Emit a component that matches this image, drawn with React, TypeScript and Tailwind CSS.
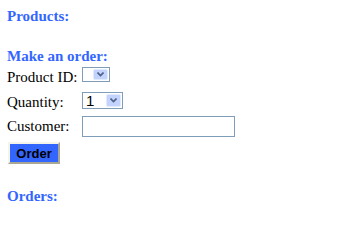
import React from 'react';

function Chevron() {
  return (
    <svg width="7" height="5" viewBox="0 0 7 5" className="block">
      <path d="M0.5 0.5 L3.5 3.5 L6.5 0.5" fill="none" stroke="#4d6185" strokeWidth="1.6" />
    </svg>
  );
}

function FakeSelect({ value, width, height }: { value?: string; width: string; height: string }) {
  return (
    <div className={`flex items-stretch border border-[#7f9db9] bg-white ${width} ${height}`}>
      <div className="flex-1 pl-[3px] flex items-center font-['Liberation_Sans',sans-serif] text-[15px] leading-none text-black">
        {value}
      </div>
      <div className="m-px w-[15px] flex items-center justify-center bg-[#c3d3fd] border border-[#e1eafe] rounded-[2px]">
        <Chevron />
      </div>
    </div>
  );
}

export default function App() {
  return (
    <div className="w-[364px] h-[240px] bg-white pl-[7px] pt-[7px] font-['Liberation_Serif',serif] text-[15px] text-black">
      <div className="h-[18px] leading-[18px] font-bold text-[#3366ff]">Products:</div>
      <div className="mt-[22px] h-[18px] leading-[18px] font-bold text-[#3366ff]">Make an order:</div>

      <div className="mt-px h-[24px] flex items-start">
        <div className="w-[75px] mt-[2px] leading-[18px]">Product ID:</div>
        <div className="mt-px">
          <FakeSelect width="w-[28px]" height="h-[15px]" />
        </div>
      </div>

      <div className="h-[25px] flex items-start">
        <div className="w-[75px] mt-[3px] leading-[18px]">Quantity:</div>
        <div className="mt-[2px]">
          <FakeSelect value="1" width="w-[41px]" height="h-[17px]" />
        </div>
      </div>

      <div className="h-[25px] flex items-start">
        <div className="w-[75px] mt-[2px] leading-[18px]">Customer:</div>
        <input
          type="text"
          className="mt-px w-[153px] h-[21px] border border-[#7f9db9] bg-white outline-none"
        />
      </div>

      <button
        type="button"
        className="mt-[2px] ml-px w-[52px] h-[22px] bg-[#3366ff] border-2 border-t-[#f5f4ea] border-l-[#f5f4ea] border-b-[#a9a695] border-r-[#a9a695] font-['Liberation_Sans',sans-serif] font-bold text-[13px] leading-none text-black"
      >
        Order
      </button>

      <div className="mt-[23px] h-[18px] leading-[18px] font-bold text-[#3366ff]">Orders:</div>
    </div>
  );
}
